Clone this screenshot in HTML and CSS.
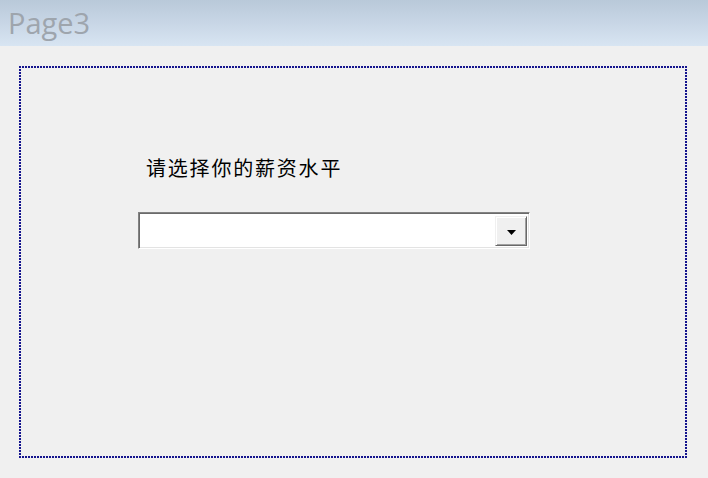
FILE: index.html
```html
<!DOCTYPE html>
<html>
<head>
<meta charset="utf-8">
<link rel="stylesheet" href="styles.css">
</head>
<body>
<div class="header"><span class="title">Page3</span></div>
<div class="panel">
  <div class="label">请选择你的薪资水平</div>
  <div class="combo">
    <div class="combo-field"></div>
    <div class="combo-btn">
      <svg width="9" height="5" viewBox="0 0 9 5"><polygon points="0,0 9,0 4.5,5" fill="#000"/></svg>
    </div>
  </div>
</div>
</body>
</html>
```
FILE: styles.css
```css
html, body {
  margin: 0;
  padding: 0;
  background: #f0f0f0;
  width: 708px;
  height: 478px;
  overflow: hidden;
}
.header {
  height: 46px;
  background: linear-gradient(to bottom, #b9c9d9 0%, #c8d6e6 50%, #d8e5f2 100%);
  display: flex;
  align-items: center;
  padding-left: 8px;
  box-sizing: border-box;
}
.title {
  font-family: "Open Sans", "Liberation Sans", sans-serif;
  font-size: 29px;
  color: #9ea5ad;
  line-height: 32px;
}
.panel {
  margin: 20px 0 0 19px;
  width: 668px;
  height: 392px;
  box-sizing: border-box;
  background:
    repeating-linear-gradient(to right, #14148e 0 2px, transparent 2px 3px) left top / 100% 2px no-repeat,
    repeating-linear-gradient(to right, #14148e 0 2px, transparent 2px 3px) left bottom / 100% 2px no-repeat,
    repeating-linear-gradient(to bottom, #14148e 0 2px, transparent 2px 3px) left top / 2px 100% no-repeat,
    repeating-linear-gradient(to bottom, #14148e 0 2px, transparent 2px 3px) right top / 2px 100% no-repeat;
  padding: 90px 0 0 119px;
}
.label {
  font-family: "Noto Sans CJK SC", "Noto Sans", sans-serif;
  font-size: 20px;
  line-height: 24px;
  letter-spacing: 1.8px;
  color: #000;
  margin-left: 8px;
}
.combo {
  margin-top: 32px;
  width: 392px;
  height: 37px;
  box-sizing: border-box;
  border: 1px solid;
  border-color: #828282 #ffffff #ffffff #828282;
  box-shadow: inset 1px 1px 0 #6a6a6a, inset -1px -1px 0 #e3e3e3;
  background: #fff;
  display: flex;
  padding: 3px 2px 2px 2px;
}
.combo-field {
  flex: 1;
}
.combo-btn {
  width: 32px;
  box-sizing: border-box;
  background: #f0f0f0;
  border: 1px solid;
  border-color: #f0f0f0 #696969 #696969 #f0f0f0;
  box-shadow: inset 1px 1px 0 #ffffff, inset -1px -1px 0 #a0a0a0;
  display: flex;
  align-items: center;
  justify-content: center;
  padding-top: 2px;
}
.combo-btn svg {
  display: block;
}
```
